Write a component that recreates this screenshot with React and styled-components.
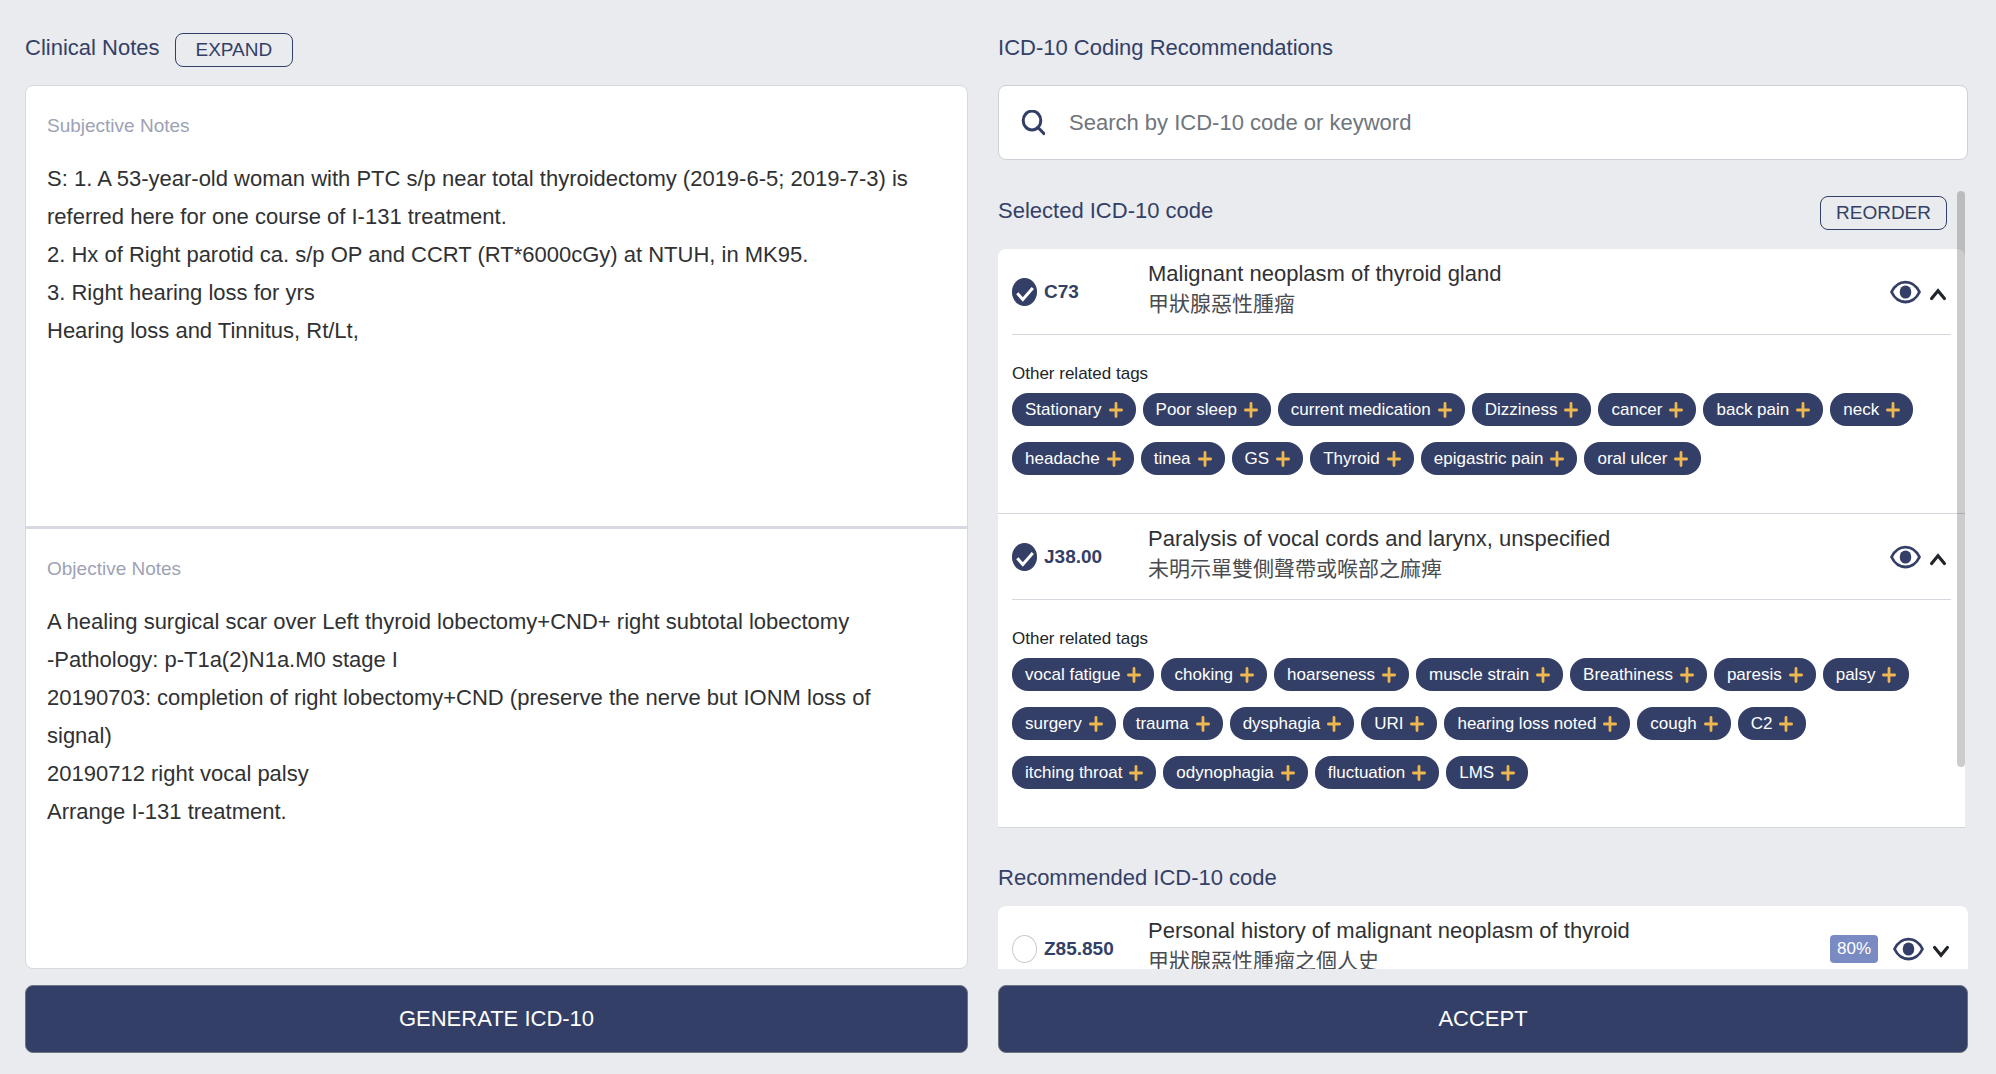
import React, { useState } from 'react';
import styled, { createGlobalStyle } from 'styled-components';

const subjective = `S: 1. A 53-year-old woman with PTC s/p near total thyroidectomy (2019-6-5; 2019-7-3) is referred here for one course of I-131 treatment.
2. Hx of Right parotid ca. s/p OP and CCRT (RT*6000cGy) at NTUH, in MK95.
3. Right hearing loss for yrs
Hearing loss and Tinnitus, Rt/Lt,`;

const objective = `A healing surgical scar over Left thyroid lobectomy+CND+ right subtotal lobectomy
-Pathology: p-T1a(2)N1a.M0 stage I
20190703: completion of right lobectomy+CND (preserve the nerve but IONM loss of signal)
20190712 right vocal palsy
Arrange I-131 treatment.`;

const selectedCodes = [
  {
    code: 'C73',
    name: 'Malignant neoplasm of thyroid gland',
    chinese: '甲狀腺惡性腫瘤',
    tags: [
      'Stationary', 'Poor sleep', 'current medication', 'Dizziness', 'cancer', 'back pain', 'neck',
      'headache', 'tinea', 'GS', 'Thyroid', 'epigastric pain', 'oral ulcer',
    ],
  },
  {
    code: 'J38.00',
    name: 'Paralysis of vocal cords and larynx, unspecified',
    chinese: '未明示單雙側聲帶或喉部之麻痺',
    tags: [
      'vocal fatigue', 'choking', 'hoarseness', 'muscle strain', 'Breathiness', 'paresis', 'palsy',
      'surgery', 'trauma', 'dysphagia', 'URI', 'hearing loss noted', 'cough', 'C2',
      'itching throat', 'odynophagia', 'fluctuation', 'LMS',
    ],
  },
];

const recommendedCodes = [
  {
    code: 'Z85.850',
    name: 'Personal history of malignant neoplasm of thyroid',
    chinese: '甲狀腺惡性腫瘤之個人史',
    score: '80%',
  },
];

const SearchIcon = () => (
  <svg width="24" height="26" viewBox="0 0 24 26" fill="none" stroke="#343f67" strokeWidth="3" aria-hidden="true">
    <ellipse cx="11" cy="10.5" rx="8.8" ry="9.4" />
    <path d="M17 17.5l6 6.2" strokeLinecap="round" />
  </svg>
);

const EyeIcon = () => (
  <svg width="31" height="24" viewBox="0 0 31 24" aria-hidden="true">
    <path
      d="M1.5 12C8 -1.3 23 -1.3 29.5 12C23 25.3 8 25.3 1.5 12Z"
      fill="none"
      stroke="#343f67"
      strokeWidth="2.8"
      strokeLinejoin="round"
    />
    <ellipse cx="15.5" cy="12" rx="5.8" ry="6.6" fill="#343f67" />
  </svg>
);

const ChevronIcon = ({ up }) => (
  <svg width="18" height="18" viewBox="0 0 18 18" fill="none" stroke="#212529" strokeWidth="3.2" strokeLinecap="round" aria-hidden="true">
    <path d={up ? 'M2.6 15.5L9 7.8L15.4 15.5' : 'M2.6 7.5L9 15.2L15.4 7.5'} />
  </svg>
);

const PlusIcon = () => (
  <svg width="14" height="16" viewBox="0 0 14 16" stroke="#efb750" strokeWidth="2.8" strokeLinecap="round" aria-hidden="true">
    <path d="M7 1.4V14.6M1.4 8H12.6" />
  </svg>
);

const CodeItem = ({ item, checked: initiallyChecked }) => {
  const [checked, setChecked] = useState(initiallyChecked);
  const [open, setOpen] = useState(Boolean(item.tags));

  return (
    <Item>
      <ItemRow $open={open}>
        <CodeLabel>
          <CheckBox>
            <input type="checkbox" checked={checked} onChange={(e) => setChecked(e.target.checked)} />
            {checked && (
              <svg width="25" height="28" viewBox="0 0 25 28" fill="none" stroke="#fff" strokeWidth="3" aria-hidden="true">
                <path d="M5.3 15.2l5.5 6.2L20.8 10" />
              </svg>
            )}
          </CheckBox>
          {item.code}
        </CodeLabel>
        <Names>
          <p>{item.name}</p>
          <p lang="zh-Hant">{item.chinese}</p>
        </Names>
        <Actions>
          {item.score && <Score>{item.score}</Score>}
          <IconButton type="button" aria-label={`View ${item.code}`}>
            <EyeIcon />
          </IconButton>
          <IconButton type="button" aria-label="Toggle related tags" aria-expanded={open} onClick={() => setOpen(!open)}>
            <ChevronIcon up={open} />
          </IconButton>
        </Actions>
      </ItemRow>
      {open && item.tags && (
        <Related>
          <h3>Other related tags</h3>
          <Tags>
            {item.tags.map((tag) => (
              <Tag type="button" key={tag}>
                {tag}
                <PlusIcon />
              </Tag>
            ))}
          </Tags>
        </Related>
      )}
    </Item>
  );
};

const App = () => (
  <>
    <GlobalStyle />
    <Page>
      <Column>
        <TopBar>
          <Title>Clinical Notes</Title>
          <OutlineButton type="button" $wide>EXPAND</OutlineButton>
        </TopBar>
        <NotesCard>
          <Note>
            <label htmlFor="subjective">Subjective Notes</label>
            <textarea id="subjective" defaultValue={subjective} spellCheck={false} />
          </Note>
          <Note>
            <label htmlFor="objective">Objective Notes</label>
            <textarea id="objective" defaultValue={objective} spellCheck={false} />
          </Note>
        </NotesCard>
        <MainButton type="button">GENERATE ICD-10</MainButton>
      </Column>

      <Column>
        <TopBar>
          <Title>ICD-10 Coding Recommendations</Title>
        </TopBar>
        <SearchBox>
          <SearchIcon />
          <input type="search" aria-label="Search ICD-10" placeholder="Search by ICD-10 code or keyword" />
        </SearchBox>
        <Results>
          <ScrollArea>
            <SectionBar>
              <Title>Selected ICD-10 code</Title>
              <OutlineButton type="button">REORDER</OutlineButton>
            </SectionBar>
            <CodeList $inset>
              {selectedCodes.map((item) => (
                <CodeItem key={item.code} item={item} checked />
              ))}
            </CodeList>
            <SectionBar $lower>
              <Title>Recommended ICD-10 code</Title>
            </SectionBar>
            <CodeList>
              {recommendedCodes.map((item) => (
                <CodeItem key={item.code} item={item} checked={false} />
              ))}
            </CodeList>
          </ScrollArea>
          <ScrollThumb />
        </Results>
        <MainButton type="button">ACCEPT</MainButton>
      </Column>
    </Page>
  </>
);

const GlobalStyle = createGlobalStyle`
  * {
    box-sizing: border-box;
  }

  body {
    margin: 0;
    background: #e9ebee;
    color: #303133;
    font-family: 'Liberation Sans', Arial, 'Noto Sans CJK TC', sans-serif;
    font-size: 22px;
  }

  h1, h2, h3, p, ul {
    margin: 0;
    padding: 0;
  }

  button, input, textarea {
    font-family: inherit;
  }
`;

const Page = styled.main`
  display: grid;
  grid-template-columns: minmax(0, 35fr) minmax(0, 36fr);
  column-gap: 30px;
  height: 100vh;
  padding: 0 28px 21px 25px;
`;

const Column = styled.section`
  display: flex;
  flex-direction: column;
  min-height: 0;
`;

const TopBar = styled.header`
  display: flex;
  align-items: flex-start;
  gap: 15px;
  padding: 33px 0 18px;
  min-height: 85px;
`;

const Title = styled.h2`
  font-size: 22px;
  font-weight: 400;
  line-height: 30px;
  color: #343f67;
`;

const OutlineButton = styled.button`
  height: 34px;
  padding: 0 ${({ $wide }) => ($wide ? 20 : 15)}px;
  background: transparent;
  border: 1px solid #343f67;
  border-radius: 8px;
  color: #343f67;
  font-size: 19px;
  line-height: 32px;
  cursor: pointer;
`;

const NotesCard = styled.div`
  flex: 1;
  display: flex;
  flex-direction: column;
  min-height: 0;
  background: #fff;
  border: 1px solid #d5d8df;
  border-radius: 8px;
`;

const Note = styled.div`
  flex: 1;
  display: flex;
  flex-direction: column;
  padding: 26px 32px 0 21px;

  & + & {
    border-top: 3px solid #d7d8e2;
  }

  label {
    color: #9da2b5;
    font-size: 19px;
    line-height: 28px;
  }

  textarea {
    flex: 1;
    margin-top: 20px;
    padding: 0;
    border: none;
    outline: none;
    resize: none;
    background: transparent;
    color: #303133;
    font-size: 22px;
    line-height: 38px;
  }
`;

const MainButton = styled.button`
  flex: none;
  height: 68px;
  margin-top: 16px;
  background: #343f67;
  border: 1px solid #6c757d;
  border-radius: 8px;
  color: #fff;
  font-size: 22px;
  cursor: pointer;
`;

const SearchBox = styled.div`
  flex: none;
  display: flex;
  align-items: center;
  gap: 24px;
  height: 75px;
  padding: 0 22px;
  background: #fff;
  border: 1px solid #ced1d7;
  border-radius: 8px;

  input {
    flex: 1;
    min-width: 0;
    padding: 0;
    border: none;
    outline: none;
    color: #303133;
    font-size: 22px;
  }

  input::placeholder {
    color: #6f757c;
    opacity: 1;
  }
`;

const Results = styled.div`
  position: relative;
  flex: 1;
  min-height: 0;
  margin-top: 31px;
`;

const ScrollArea = styled.div`
  height: 100%;
  overflow-y: auto;
  scrollbar-width: none;
`;

const ScrollThumb = styled.div`
  position: absolute;
  top: 0;
  right: 3px;
  width: 8px;
  height: 74%;
  border-radius: 4px;
  background: rgba(0, 0, 0, 0.2);
  pointer-events: none;
`;

const SectionBar = styled.div`
  display: flex;
  justify-content: space-between;
  padding: ${({ $lower }) => ($lower ? '35px 21px 13px 0' : '5px 21px 19px 0')};
`;

const CodeList = styled.ul`
  list-style: none;
  margin-right: ${({ $inset }) => ($inset ? 3 : 0)}px;
  background: #fff;
  border-radius: 8px 8px 0 0;
`;

const Item = styled.li`
  padding: 0 14px;
  border-bottom: 1px solid #d5d7df;
`;

const ItemRow = styled.div`
  display: grid;
  grid-template-columns: 136px minmax(0, 1fr) auto;
  align-items: center;
  height: 86px;
  padding-right: 4px;
  border-bottom: 1px solid ${({ $open }) => ($open ? '#d5d7df' : 'transparent')};
`;

const CodeLabel = styled.label`
  display: flex;
  align-items: center;
  gap: 7px;
  color: #343f67;
  font-size: 19px;
  font-weight: 700;
  line-height: 28px;
  cursor: pointer;
`;

const CheckBox = styled.span`
  display: grid;

  & > * {
    grid-area: 1 / 1;
  }

  svg {
    pointer-events: none;
  }

  input {
    appearance: none;
    width: 25px;
    height: 28px;
    margin: 0;
    border: 1px solid #c9cbd0;
    border-radius: 50%;
    background: #fff;
  }

  input:checked {
    background: #343f67;
    border-color: #343f67;
  }
`;

const Names = styled.div`
  padding-bottom: 6px;
  line-height: 30px;

  p + p {
    color: #4a4c50;
    font-size: 21px;
  }
`;

const Actions = styled.div`
  display: flex;
  align-items: center;
  gap: 8px;
`;

const Score = styled.span`
  margin-right: 7px;
  padding: 0 7px;
  background: #7a8bc4;
  border-radius: 4px;
  color: #fff;
  font-size: 17px;
  line-height: 28px;
`;

const IconButton = styled.button`
  display: flex;
  padding: 0;
  border: none;
  background: none;
  cursor: pointer;
`;

const Related = styled.div`
  padding: 27px 0 38px;

  h3 {
    color: #212529;
    font-size: 17px;
    font-weight: 400;
    line-height: 24px;
  }
`;

const Tags = styled.div`
  display: flex;
  flex-wrap: wrap;
  gap: 16px 7px;
  margin-top: 7px;
`;

const Tag = styled.button`
  display: flex;
  align-items: center;
  gap: 7px;
  height: 33px;
  padding: 0 13px;
  border: none;
  border-radius: 16px;
  background: #343f67;
  color: #fff;
  font-size: 17px;
  cursor: pointer;
`;

export default App;
